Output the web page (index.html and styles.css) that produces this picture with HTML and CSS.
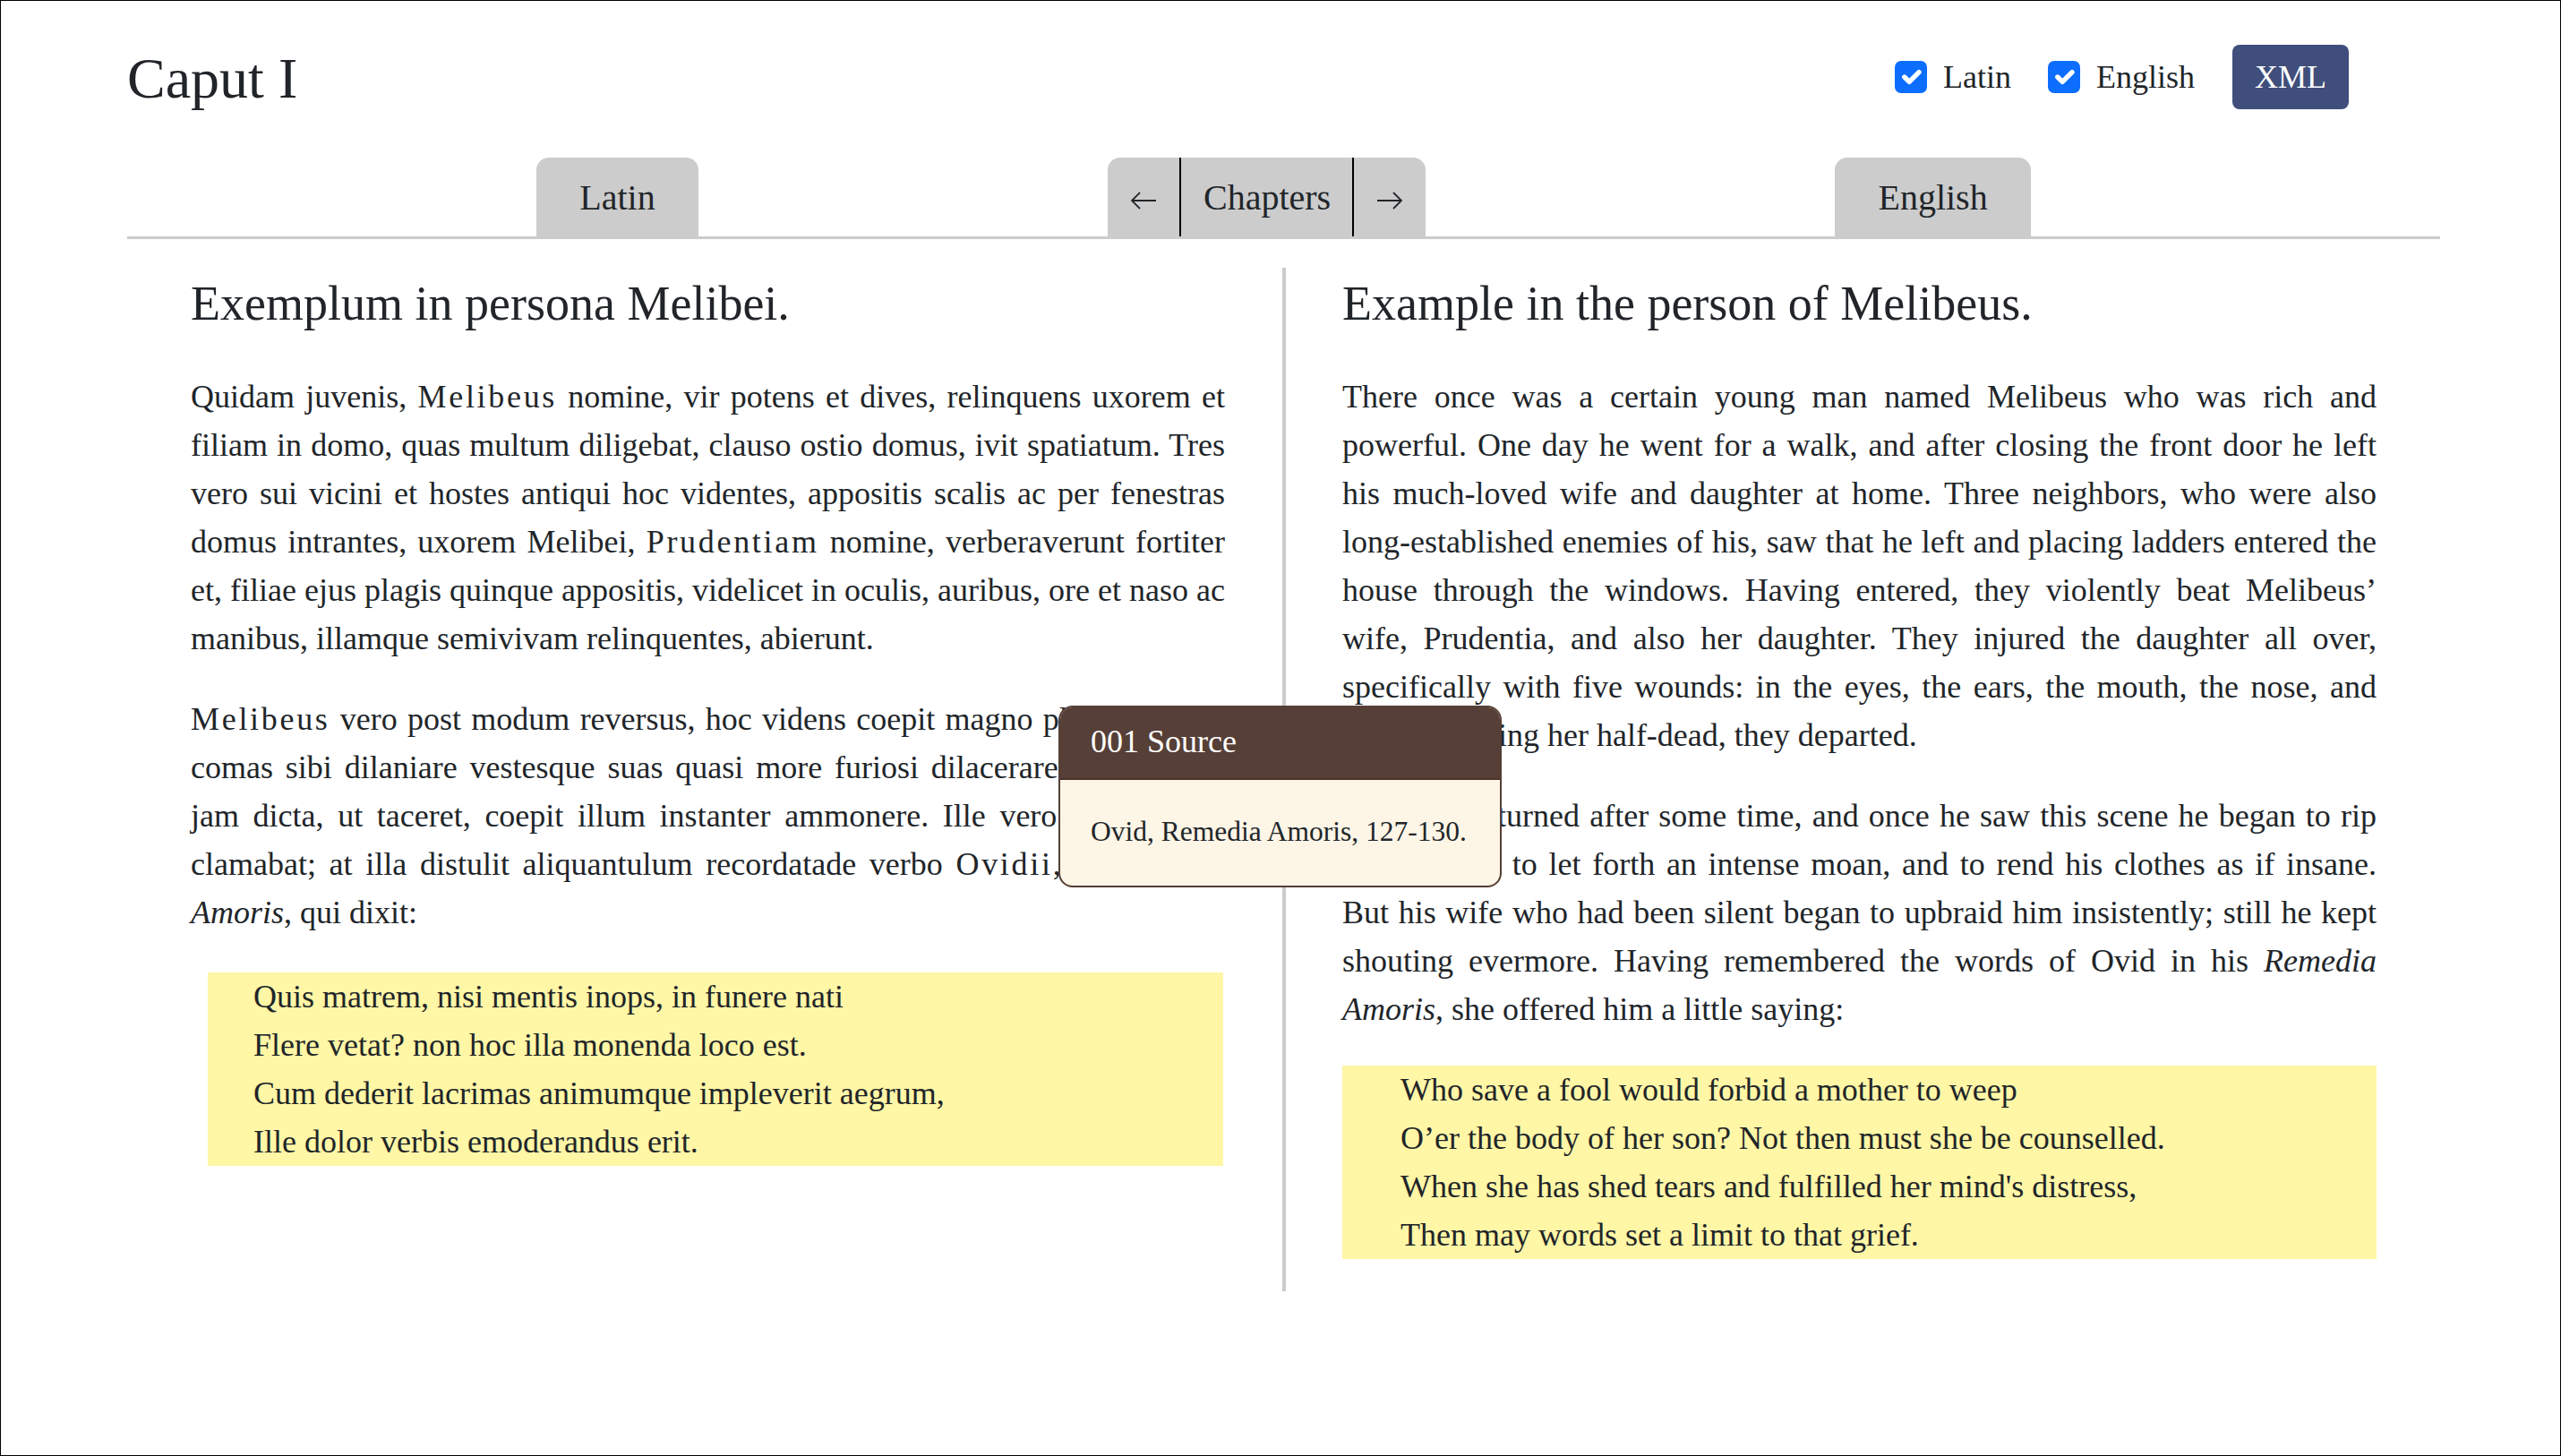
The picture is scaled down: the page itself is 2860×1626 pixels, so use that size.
FILE: index.html
```html
<!DOCTYPE html>
<html lang="la">
<head>
<meta charset="utf-8">
<title>Caput I</title>
<link rel="stylesheet" href="styles.css">
</head>
<body>
<div class="page">
  <div class="container">
    <header class="topbar">
      <h1 class="title">Caput I</h1>
      <div class="controls">
        <label class="check"><span class="box"><svg viewBox="0 0 20 20"><path d="m6 10 3 3 6-6"/></svg></span><span>Latin</span></label>
        <label class="check"><span class="box"><svg viewBox="0 0 20 20"><path d="m6 10 3 3 6-6"/></svg></span><span>English</span></label>
        <button class="xml">XML</button>
      </div>
    </header>

    <nav class="tabs">
      <div class="tab">Latin</div>
      <div class="tab chapters">
        <span class="nav-arrow"><svg width="28" height="20" viewBox="0 0 28 20"><path d="M1 10 H28 M10 1 L1 10 L10 19"/></svg></span>
        <span class="chap">Chapters</span>
        <span class="nav-arrow"><svg width="28" height="20" viewBox="0 0 28 20"><path d="M0 10 H27 M18 1 L27 10 L18 19"/></svg></span>
      </div>
      <div class="tab">English</div>
    </nav>

    <main class="columns">
      <section class="col col-la">
        <h2 class="heading">Exemplum in persona Melibei.</h2>
        <p>Quidam juvenis, <span class="spaced">Melibeus</span> nomine, vir potens et dives, relinquens uxorem et filiam in domo, quas multum diligebat, clauso ostio domus, ivit spatiatum. Tres vero sui vicini et hostes antiqui hoc videntes, appositis scalis ac per fenestras domus intrantes, uxorem Melibei, <span class="spaced">Prudentiam</span> nomine, verberaverunt fortiter et, filiae ejus plagis quinque appositis, videlicet in oculis, auribus, ore et naso ac manibus, illamque semivivam relinquentes, abierunt.</p>
        <p><span class="spaced">Melibeus</span> vero post modum reversus, hoc videns coepit magno planctu crines comas sibi dilaniare vestesque suas quasi more furiosi dilacerare. Uxor, quae jam dicta, ut taceret, coepit illum instanter ammonere. Ille vero nihilominus clamabat; at illa distulit aliquantulum recordatade verbo <span class="spaced">Ovidii</span>, in <i>Remedio</i> <i>Amoris</i>, qui dixit:</p>
        <div class="verse">
          <div>Quis matrem, nisi mentis inops, in funere nati</div>
          <div>Flere vetat? non hoc illa monenda loco est.</div>
          <div>Cum dederit lacrimas animumque impleverit aegrum,</div>
          <div>Ille dolor verbis emoderandus erit.</div>
        </div>
      </section>
      <section class="col col-en">
        <h2 class="heading">Example in the person of Melibeus.</h2>
        <p>There once was a certain young man named Melibeus who was rich and powerful. One day he went for a walk, and after closing the front door he left his much-loved wife and daughter at home. Three neighbors, who were also long-established enemies of his, saw that he left and placing ladders entered the house through the windows. Having entered, they violently beat Melibeus’ wife, Prudentia, and also her daughter. They injured the daughter all over, specifically with five wounds: in the eyes, the ears, the mouth, the nose, and hands. Leaving her half-dead, they departed.</p>
        <p>Melibeus returned after some time, and once he saw this scene he began to rip out his hair, to let forth an intense moan, and to rend his clothes as if insane. But his wife who had been silent began to upbraid him insistently; still he kept shouting evermore. Having remembered the words of Ovid in his <i>Remedia Amoris</i>, she offered him a little saying:</p>
        <div class="verse">
          <div>Who save a fool would forbid a mother to weep</div>
          <div>O’er the body of her son? Not then must she be counselled.</div>
          <div>When she has shed tears and fulfilled her mind's distress,</div>
          <div>Then may words set a limit to that grief.</div>
        </div>
      </section>
    </main>
  </div>

  <div class="popover">
    <div class="pop-head">001 Source</div>
    <div class="pop-body">Ovid, Remedia Amoris, 127-130.</div>
  </div>
</div>
</body>
</html>
```

FILE: styles.css
```css
* {
  box-sizing: border-box;
}

html,
body {
  margin: 0;
  padding: 0;
  background: #fff;
}

body {
  font-family: "Liberation Serif", "Times New Roman", serif;
  color: #212529;
}

.page {
  position: relative;
  width: 2860px;
  height: 1626px;
  border: 1px solid #000;
  overflow: hidden;
  background: #fff;
}

.container {
  margin-left: 141px;
  width: 2583px;
}

/* header */
.topbar {
  display: flex;
  justify-content: space-between;
  align-items: center;
  padding-top: 49px;
  padding-right: 102px;
}

.title {
  margin: 0;
  font-size: 64px;
  line-height: 1.2;
  font-weight: 400;
}

.controls {
  display: flex;
  align-items: center;
  gap: 41px;
  margin-bottom: 4px;
}

.check {
  display: flex;
  align-items: center;
  gap: 18px;
  font-size: 36px;
  line-height: 54px;
}

.box {
  width: 36px;
  height: 36px;
  border-radius: 7px;
  background: #0d6efd;
  display: flex;
  align-items: center;
  justify-content: center;
}

.box svg {
  width: 36px;
  height: 36px;
}

.box path {
  fill: none;
  stroke: #fff;
  stroke-width: 3;
  stroke-linecap: round;
  stroke-linejoin: round;
}

.xml {
  margin-left: 1px;
  height: 72px;
  padding: 0 25px;
  border: 0;
  border-radius: 8px;
  background: #404e7b;
  color: #fff;
  font-family: inherit;
  font-size: 36px;
  line-height: 72px;
}

/* tabs */
.tabs {
  display: flex;
  justify-content: space-evenly;
  align-items: flex-end;
  margin-top: 49px;
  border-bottom: 3px solid #ccc;
}

.tab {
  background: #ccc;
  border-radius: 14px 14px 0 0;
  font-size: 40px;
  line-height: 60px;
  padding: 15px 48px 13px;
}

.chapters {
  display: flex;
  padding: 0;
}

.nav-arrow {
  display: flex;
  align-items: center;
  padding: 8px 26px 0;
}

.nav-arrow path {
  fill: none;
  stroke: #212529;
  stroke-width: 1.8;
}

.chap {
  padding: 15px 24px 13px 25px;
  border-left: 2px solid #000;
  border-right: 2px solid #000;
}

/* columns */
.columns {
  display: grid;
  grid-template-columns: 1294px 1289px;
  margin-top: 32px;
}

.col-la {
  padding: 0 64px 0 71px;
  border-right: 4px solid #ccc;
}

.col-en {
  padding: 0 71px 0 63px;
}

.heading {
  font-size: 54px;
  line-height: 1.5;
  font-weight: 400;
  margin: 0 0 36px;
}

.col p {
  font-size: 36px;
  line-height: 54px;
  margin: 0 0 36px;
  text-align: justify;
}

.spaced {
  letter-spacing: 2.7px;
}

.verse {
  background: #fff6a6;
  font-size: 36px;
  line-height: 54px;
  margin: 0 0 36px;
}

.col-la .verse {
  margin: 40px 2px 36px 19px;
  padding-left: 51px;
}

.col-en .verse {
  padding-left: 65px;
}

/* popover */
.popover {
  position: absolute;
  left: 1181px;
  top: 787px;
  width: 495px;
  border: 2px solid #553e36;
  border-radius: 16px;
  overflow: hidden;
  background: #fdf5e6;
  z-index: 10;
}

.pop-head {
  background: #563f37;
  color: #fff;
  font-size: 36px;
  line-height: 1.2;
  padding: 17px 34px 19px;
  border-bottom: 2px solid #4a332c;
}

.pop-body {
  font-size: 31.5px;
  line-height: 1.5;
  padding: 34px 34px 37px;
}
```
